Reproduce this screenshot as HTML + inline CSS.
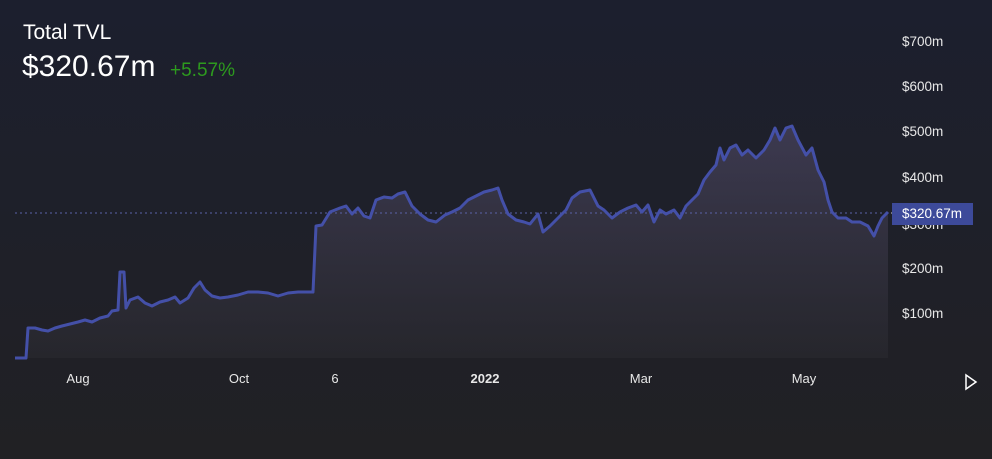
<!DOCTYPE html><html><head><style>
body{margin:0;width:992px;height:459px;overflow:hidden;background:linear-gradient(#1c1f2e,#1f2028 60%,#212124);font-family:"Liberation Sans",sans-serif;color:#fff;position:relative}
.t{position:absolute;left:23px;top:21px;font-size:21px}
.v{position:absolute;left:22px;top:50px;font-size:30px}
.p{position:absolute;left:170px;top:60px;font-size:19px;color:#2d9a1e}
.y{position:absolute;left:902px;font-size:13.5px;color:#e8e8e8}
.x{position:absolute;top:371px;font-size:13px;color:#e8e8e8;transform:translateX(-50%)}
</style></head><body>
<svg width="992" height="459" style="position:absolute;left:0;top:0">
<defs><linearGradient id="g" x1="0" y1="0" x2="0" y2="1"><stop offset="0" stop-color="#4a4560" stop-opacity=".7"/><stop offset="1" stop-color="#2a2a30" stop-opacity=".6"/></linearGradient></defs>
<polygon fill="url(#g)" points="15,358 26,358 28,328 35,328 42,330 48,331 55,328 62,326 70,324 78,322 85,320 92,322 100,318 108,316 112,311 118,310 120,272 124,272 126,308 130,300 138,297 145,303 152,306 160,302 168,300 175,297 180,303 188,298 194,288 200,282 205,290 212,296 220,298 228,297 238,295 248,292 258,292 268,293 278,296 288,293 298,292 308,292 313,292 316,226 322,225 330,212 340,208 346,206 352,214 358,208 364,216 370,218 376,200 384,197 392,198 398,194 405,192 412,206 420,214 428,220 436,222 445,215 452,212 460,208 468,200 476,196 484,192 492,190 498,188 502,200 508,214 516,220 524,222 530,224 538,214 543,232 550,226 558,218 566,210 572,198 580,192 590,190 598,206 604,210 612,218 620,212 628,208 636,205 642,212 648,205 654,222 660,210 666,214 674,210 680,218 686,206 692,200 698,194 704,180 710,172 716,165 720,148 724,160 730,148 736,145 742,155 748,150 756,158 764,150 770,140 775,128 780,140 786,128 792,126 798,140 806,155 812,148 818,170 824,182 828,200 832,212 838,218 846,218 852,222 860,222 868,226 874,236 878,226 882,218 888,212 888,358"/>
<line x1="15" y1="213" x2="888" y2="213" stroke="#5a62a8" stroke-dasharray="2,3"/>
<polyline fill="none" stroke="#4450a8" stroke-width="3" stroke-linejoin="round" points="15,358 26,358 28,328 35,328 42,330 48,331 55,328 62,326 70,324 78,322 85,320 92,322 100,318 108,316 112,311 118,310 120,272 124,272 126,308 130,300 138,297 145,303 152,306 160,302 168,300 175,297 180,303 188,298 194,288 200,282 205,290 212,296 220,298 228,297 238,295 248,292 258,292 268,293 278,296 288,293 298,292 308,292 313,292 316,226 322,225 330,212 340,208 346,206 352,214 358,208 364,216 370,218 376,200 384,197 392,198 398,194 405,192 412,206 420,214 428,220 436,222 445,215 452,212 460,208 468,200 476,196 484,192 492,190 498,188 502,200 508,214 516,220 524,222 530,224 538,214 543,232 550,226 558,218 566,210 572,198 580,192 590,190 598,206 604,210 612,218 620,212 628,208 636,205 642,212 648,205 654,222 660,210 666,214 674,210 680,218 686,206 692,200 698,194 704,180 710,172 716,165 720,148 724,160 730,148 736,145 742,155 748,150 756,158 764,150 770,140 775,128 780,140 786,128 792,126 798,140 806,155 812,148 818,170 824,182 828,200 832,212 838,218 846,218 852,222 860,222 868,226 874,236 878,226 882,218 888,212"/>
<line x1="891" y1="213" x2="896" y2="213" stroke="#ccc"/>
<path d="M966 375 L976 382 L966 389 Z" fill="none" stroke="#fff" stroke-width="1.5"/>
</svg>
<div class="t">Total TVL</div><div class="v">$320.67m</div><div class="p">+5.57%</div>
<div class="y" style="top:34px">$700m</div><div class="y" style="top:79px">$600m</div><div class="y" style="top:124px">$500m</div><div class="y" style="top:170px">$400m</div><div class="y" style="top:217px">$300m</div><div class="y" style="top:261px">$200m</div><div class="y" style="top:306px">$100m</div>
<div style="position:absolute;left:892px;top:203px;width:81px;height:22px;background:#3d4a9a"></div>
<div class="y" style="top:206px;color:#fff">$320.67m</div>
<div class="x" style="left:78px">Aug</div><div class="x" style="left:239px">Oct</div><div class="x" style="left:335px">6</div><div class="x" style="left:485px;font-weight:bold">2022</div><div class="x" style="left:641px">Mar</div><div class="x" style="left:804px">May</div>
</body></html>
